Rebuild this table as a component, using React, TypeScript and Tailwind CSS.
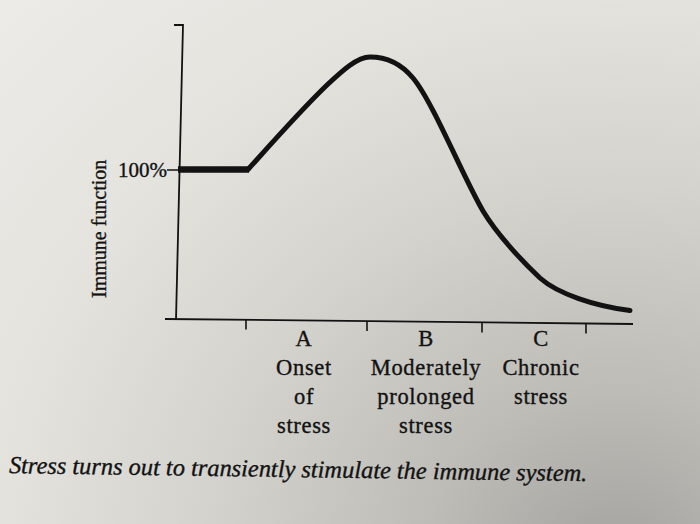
import React from 'react';

// immune response curve, page pixel coordinates
const curve =
  'M248 169.5 C275 139.5 301 110 327 85 C342 71 357 57 370 57 C388 57 403 66 413 78 ' +
  'C433 102 463 177 483 211 C498 236 525 264 540 278 C558 294 595 306 630 310.5';

const ticks = [
  { x: 246, y: 319.5 },
  { x: 367, y: 321 },
  { x: 482, y: 322.5 },
  { x: 586, y: 323.5 },
];

const phases = [
  { letter: 'A', lines: ['Onset', 'of', 'stress'], width: 'w-[120px]' },
  { letter: 'B', lines: ['Moderately', 'prolonged', 'stress'], width: 'w-[124px]' },
  { letter: 'C', lines: ['Chronic', 'stress'], width: 'w-[106px]' },
];

const ImmuneChart: React.FC = () => (
  <svg
    width={533}
    height={324}
    viewBox="167 0 533 324"
    className="shrink-0 overflow-visible"
    fill="none"
    stroke="#121212"
  >
    {/* y axis with cap */}
    <path d="M174 25 L183 25 L176 320" strokeWidth={1.8} />
    {/* 100% tick */}
    <path d="M167 170 L178 170" strokeWidth={1.5} />
    {/* x axis */}
    <path d="M165 319 L633 324" strokeWidth={1.8} />
    {ticks.map((t) => (
      <path key={t.x} d={`M${t.x} ${t.y} L${t.x} ${t.y + 10}`} strokeWidth={1.6} />
    ))}
    {/* baseline at 100% */}
    <path d="M178 169.5 L249 169.5" strokeWidth={6.5} />
    <path d={curve} strokeWidth={5} strokeLinecap="round" strokeLinejoin="round" />
  </svg>
);

export default function App() {
  return (
    <div className="w-[700px] h-[524px] overflow-hidden flex flex-col bg-[#e9e8e3] bg-[radial-gradient(ellipse_at_88%_108%,#a3a29e_0%,#bdbcb7_22%,#d4d3ce_48%,#e4e3de_72%,#ecebe7_100%)] font-['Liberation_Serif',serif] text-[#121212] [-webkit-text-stroke:0.35px_#121212]">
      {/* plot row */}
      <div className="flex h-[324px] shrink-0">
        <div className="ml-[88px] mt-[160px] w-[22px] h-[138px] text-[20px] leading-[22px] whitespace-nowrap [writing-mode:vertical-rl] rotate-180 text-center">
          Immune function
        </div>
        <div className="ml-[5px] mt-[158px] w-[52px] text-right text-[21px] leading-[24px]">100%</div>
        <ImmuneChart />
      </div>

      {/* phase labels */}
      <div className="flex pl-[244px] text-[22.5px] leading-[29px] tracking-[0.03em]">
        {phases.map((p) => (
          <div key={p.letter} className={`${p.width} flex flex-col items-center`}>
            <span>{p.letter}</span>
            {p.lines.map((line, i) => (
              <span key={i}>{line}</span>
            ))}
          </div>
        ))}
      </div>

      {/* caption */}
      <p className="mt-[11px] pl-[9px] text-[24.4px] leading-[28px] italic whitespace-nowrap origin-left rotate-[0.8deg]">
        Stress turns out to transiently stimulate the immune system.
      </p>
    </div>
  );
}
